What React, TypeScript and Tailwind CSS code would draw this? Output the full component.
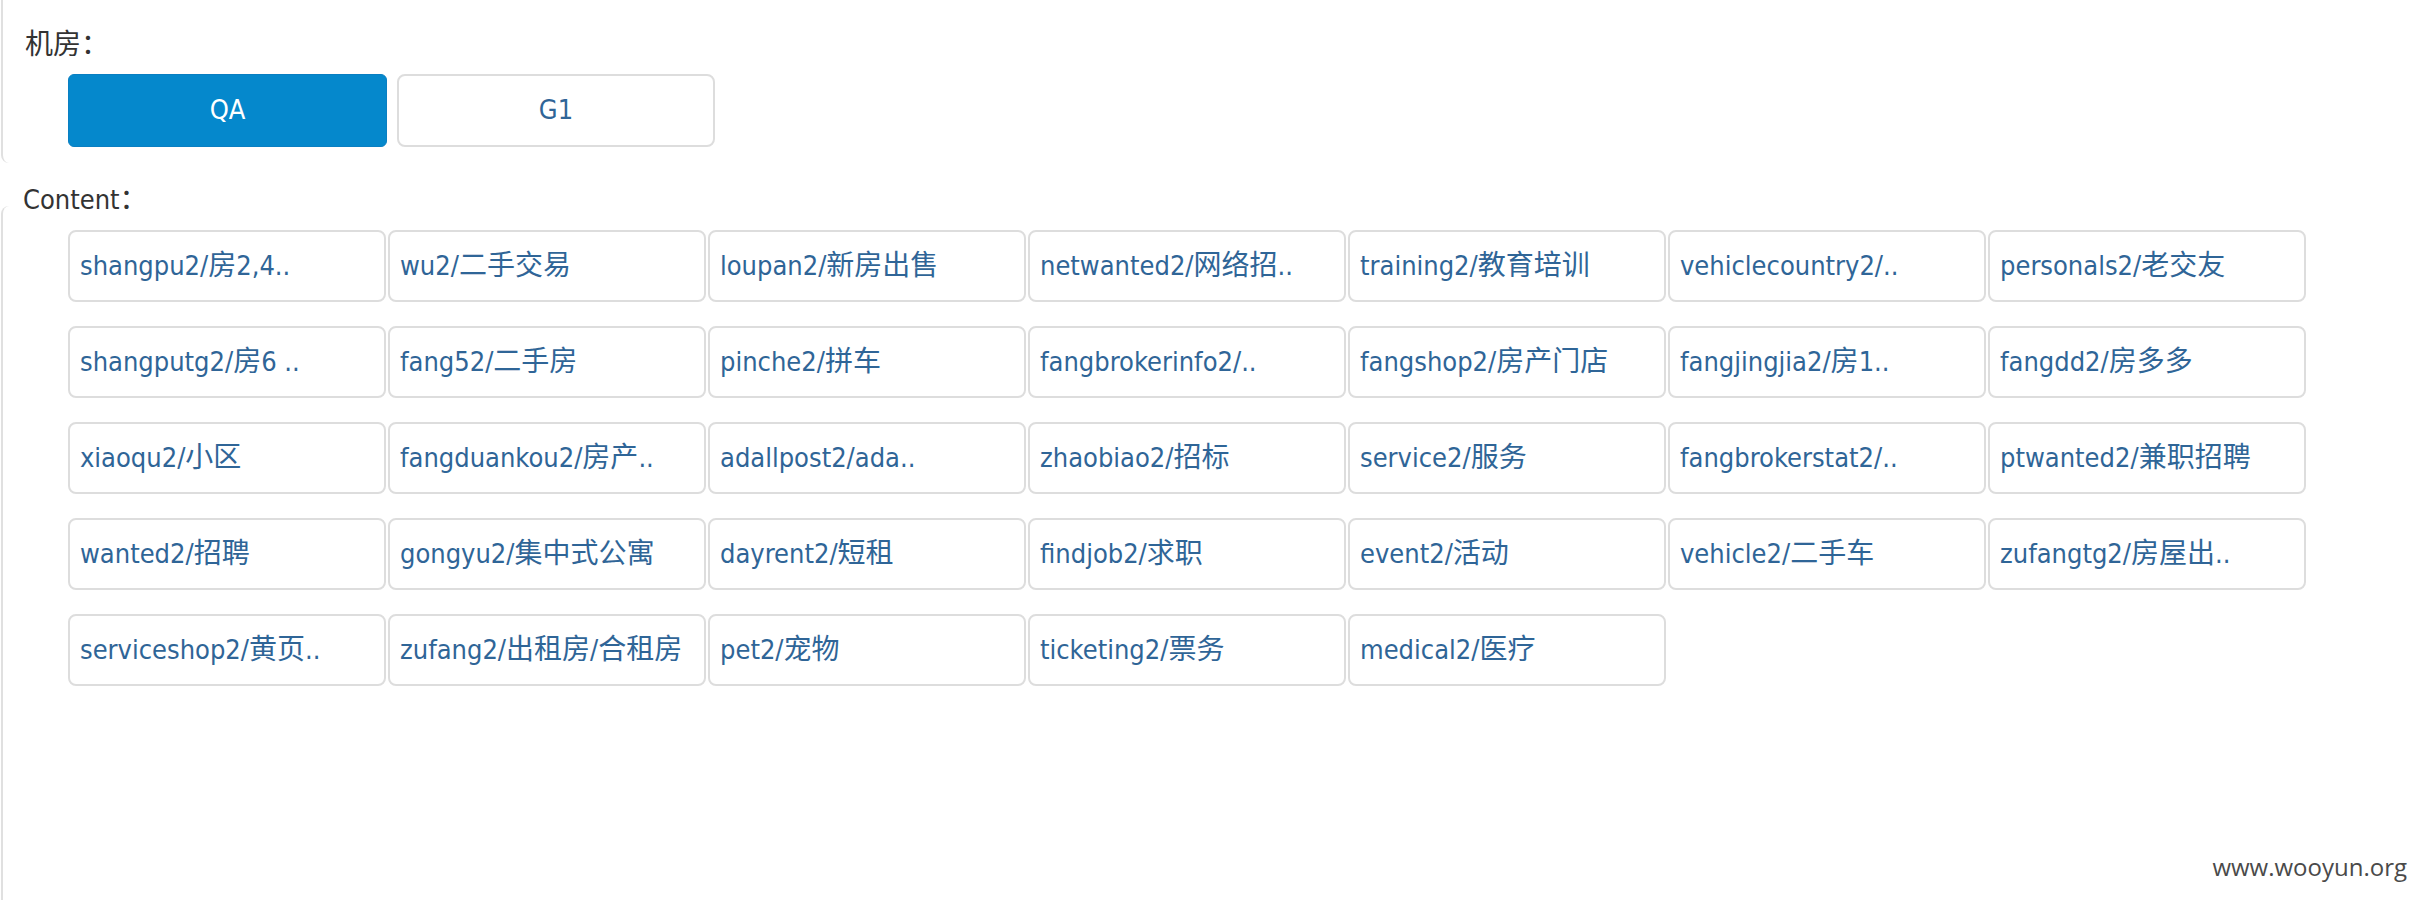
const rooms = [
  { name: "QA", active: true },
  { name: "G1", active: false },
];

const contents = [
  "shangpu2/房2,4..",
  "wu2/二手交易",
  "loupan2/新房出售",
  "netwanted2/网络招..",
  "training2/教育培训",
  "vehiclecountry2/..",
  "personals2/老交友",
  "shangputg2/房6 ..",
  "fang52/二手房",
  "pinche2/拼车",
  "fangbrokerinfo2/..",
  "fangshop2/房产门店",
  "fangjingjia2/房1..",
  "fangdd2/房多多",
  "xiaoqu2/小区",
  "fangduankou2/房产..",
  "adallpost2/ada..",
  "zhaobiao2/招标",
  "service2/服务",
  "fangbrokerstat2/..",
  "ptwanted2/兼职招聘",
  "wanted2/招聘",
  "gongyu2/集中式公寓",
  "dayrent2/短租",
  "findjob2/求职",
  "event2/活动",
  "vehicle2/二手车",
  "zufangtg2/房屋出..",
  "serviceshop2/黄页..",
  "zufang2/出租房/合租房",
  "pet2/宠物",
  "ticketing2/票务",
  "medical2/医疗",
];

// chinese glyphs render larger than the latin ones in the original
const CJK = /([\u3000-\u303f\u4e00-\u9fff\uff00-\uffef]+)/;

function Label({ text }: { text: string }) {
  return (
    <span className="leading-9">
      {text.split(CJK).map((part, i) =>
        CJK.test(part) ? (
          <span key={i} className="text-[28px]">
            {part}
          </span>
        ) : (
          <span key={i}>{part}</span>
        )
      )}
    </span>
  );
}

export default function App() {
  return (
    <div className="relative flex min-h-[900px] flex-col overflow-hidden bg-white font-['DejaVu_Sans_Condensed','DejaVu_Sans','Noto_Sans_CJK_SC',sans-serif] text-[27px] text-[#333]">
      {/* 机房 */}
      <section className="ml-px rounded-bl-lg border-l-2 border-[#e0e0e0] pt-[27px] pb-4">
        <div className="h-9 pl-[22px] leading-9">
          <Label text="机房：" />
        </div>
        <div className="mt-[11px] flex gap-[10px] pl-[65px]">
          {rooms.map((r) =>
            r.active ? (
              <button
                key={r.name}
                className="flex h-[73px] w-[319px] items-center justify-center rounded-md border border-[#0a7fc2] bg-[#0588cc] text-white"
              >
                {r.name}
              </button>
            ) : (
              <button
                key={r.name}
                className="flex h-[73px] w-[318px] items-center justify-center rounded-lg border-2 border-[#dddddd] bg-white text-[#2f6597]"
              >
                {r.name}
              </button>
            )
          )}
        </div>
      </section>

      {/* Content */}
      <div className="mt-[19px] h-9 pl-[23px] leading-9">
        <Label text="Content：" />
      </div>
      <section className="ml-px -mt-[12px] flex-1 rounded-tl-lg border-l-2 border-[#e0e0e0] pt-6">
        <div className="flex flex-wrap gap-x-[2px] gap-y-6 pl-[65px]">
          {contents.map((c) => (
            <a
              key={c}
              href="#"
              className="flex h-[72px] w-[318px] items-center rounded-lg border-2 border-[#dddddd] bg-white px-[10px] whitespace-nowrap text-[#2f6597]"
            >
              <Label text={c} />
            </a>
          ))}
        </div>
      </section>

      <div className="absolute right-[9px] bottom-[15px] font-['Open_Sans',sans-serif] text-[24px] leading-normal text-[#4a4a4a]">
        www.wooyun.org
      </div>
    </div>
  );
}
